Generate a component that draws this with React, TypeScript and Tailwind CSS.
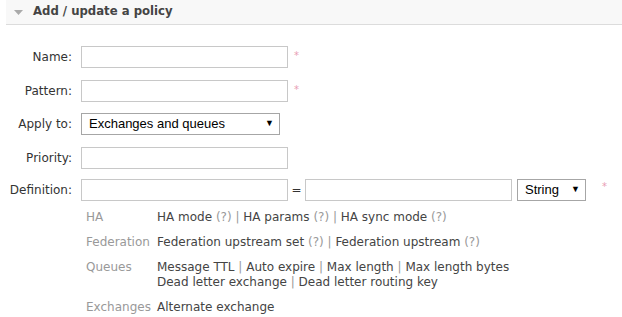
import React from "react";

const labelFont = { fontFamily: '"DejaVu Sans", Verdana, sans-serif' };

function Field({ label, children, required, top }: { label: string; children: React.ReactNode; required?: boolean; top: string }) {
  return (
    <div className={`flex items-start h-[22px] ${top}`}>
      <div className="w-[73px] text-right text-[12px] text-[#333] leading-[22px] pr-[1px]">{label}</div>
      <div className="ml-[8px] flex items-start">{children}</div>
      {required && <span className="ml-[6px] mt-[3px] text-[10px] leading-[14px] text-[#e8a0b4]">*</span>}
    </div>
  );
}

function TextBox({ w }: { w: string }) {
  return <div className={`${w} h-[22px] border border-[#c8c8c8] bg-white`} />;
}

function FakeSelect({ value, w }: { value: string; w: string }) {
  return (
    <div
      className={`${w} h-[22px] border border-[#a6a6a6] bg-white flex items-center justify-between pl-[7px] pr-[5px] text-[13px] text-black`}
      style={{ fontFamily: '"Liberation Sans", Arial, sans-serif' }}
    >
      <span>{value}</span>
      <span className="text-[9px]">▼</span>
    </div>
  );
}

function Q() {
  return <span className="text-[#999]">(?)</span>;
}

function Sep() {
  return <span className="text-[#999]"> | </span>;
}

export default function App() {
  const help: { label: string; lines: React.ReactNode[] }[] = [
    {
      label: "HA",
      lines: [
        <>
          HA mode <Q /><Sep />HA params <Q /><Sep />HA sync mode <Q />
        </>,
      ],
    },
    {
      label: "Federation",
      lines: [
        <>
          Federation upstream set <Q /><Sep />Federation upstream <Q />
        </>,
      ],
    },
    {
      label: "Queues",
      lines: [
        <>
          Message TTL<Sep />Auto expire<Sep />Max length<Sep />Max length bytes
        </>,
        <>
          Dead letter exchange<Sep />Dead letter routing key
        </>,
      ],
    },
    { label: "Exchanges", lines: [<>Alternate exchange</>] },
  ];

  return (
    <div className="w-[622px] h-[317px] bg-white overflow-hidden" style={labelFont}>
      {/* Section header */}
      <div className="ml-[6px] h-[25px] bg-[#f8f8f8] border-b border-[#dcdcdc] flex items-center">
        <svg width="9" height="6" viewBox="0 0 9 6" className="ml-[8px] mt-[1px]">
          <path d="M0 0 L9 0 L4.5 5 Z" fill="#aaa" />
        </svg>
        <span className="ml-[10px] text-[11.7px] font-bold text-[#444]">Add / update a policy</span>
      </div>

      <div className="pt-[21px] flex flex-col">
        <Field label="Name:" required top="">
          <TextBox w="w-[207px]" />
        </Field>
        <Field label="Pattern:" required top="mt-[12px]">
          <TextBox w="w-[207px]" />
        </Field>
        <Field label="Apply to:" top="mt-[11px]">
          <FakeSelect value="Exchanges and queues" w="w-[199px]" />
        </Field>
        <Field label="Priority:" top="mt-[12px]">
          <TextBox w="w-[207px]" />
        </Field>
        <div className="flex items-start h-[22px] mt-[10px]">
          <div className="w-[73px] text-right text-[12px] text-[#333] leading-[22px] pr-[1px]">Definition:</div>
          <div className="ml-[8px] flex items-start">
            <TextBox w="w-[207px]" />
            <span className="w-[17px] text-center text-[12px] leading-[22px] text-[#333]">=</span>
            <TextBox w="w-[207px]" />
            <div className="ml-[5px]">
              <FakeSelect value="String" w="w-[69px]" />
            </div>
            <span className="ml-[16px] mt-[1px] text-[10px] leading-[14px] text-[#e8a0b4]">*</span>
          </div>
        </div>
      </div>

      <div className="mt-[9px] ml-[86px] flex flex-col gap-[10px] text-[12px] leading-[15px]">
        {help.map((h) => (
          <div key={h.label} className="flex">
            <div className="w-[71px] text-[#999]">{h.label}</div>
            <div className="text-[#444]">
              {h.lines.map((l, i) => (
                <div key={i}>{l}</div>
              ))}
            </div>
          </div>
        ))}
      </div>
    </div>
  );
}
